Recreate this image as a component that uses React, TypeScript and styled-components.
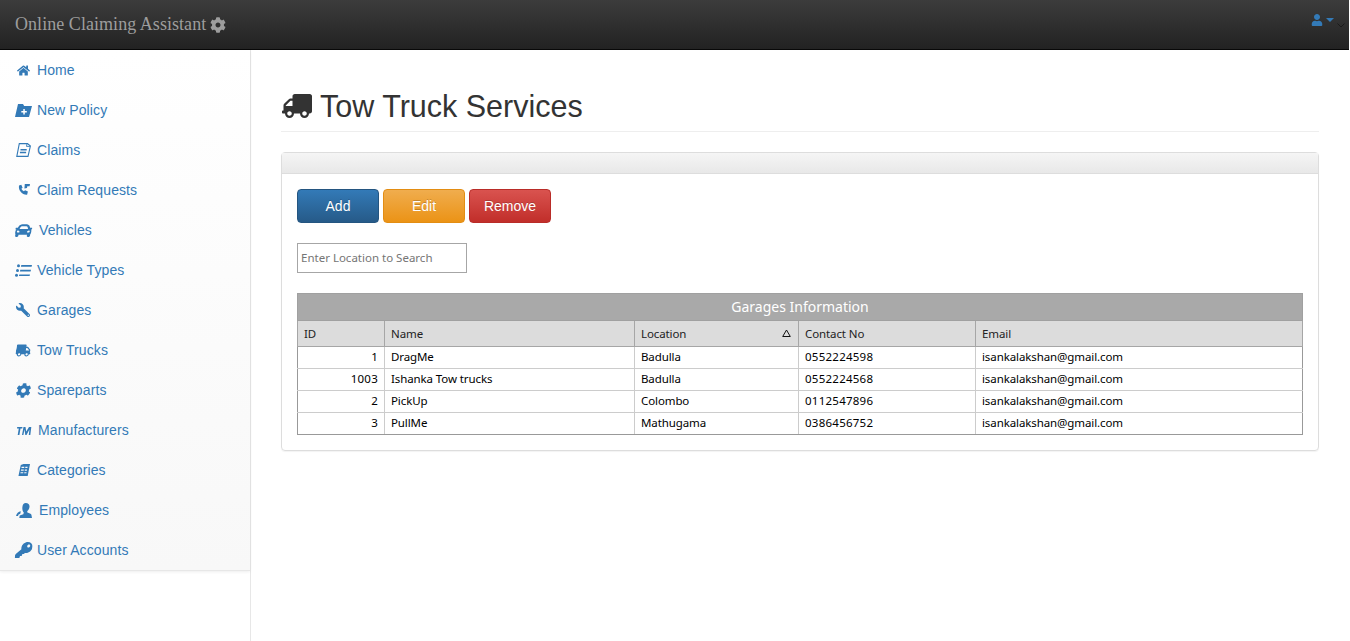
import { ReactNode } from 'react';
import styled, { createGlobalStyle } from 'styled-components';
import { FaCar, FaCog, FaHome, FaKey, FaTruck, FaUser, FaWrench } from 'react-icons/fa';

const GlobalStyle = createGlobalStyle`
  html, body {
    margin: 0;
    height: 100%;
    background: #fff;
    font-family: "Liberation Sans", Arial, sans-serif;
    font-size: 14px;
    color: #333;
  }
  * { box-sizing: border-box; }
`;

const Page = styled.div`
  display: flex;
  flex-direction: column;
  width: 1349px;
  height: 641px;
  overflow: hidden;
`;

const Navbar = styled.header`
  flex: none;
  height: 50px;
  display: flex;
  align-items: center;
  justify-content: space-between;
  padding: 0 4px 0 15px;
  background: linear-gradient(to bottom, #3c3c3c, #222);
  border-bottom: 1px solid #080808;
`;

const Brand = styled.div`
  display: flex;
  align-items: center;
  gap: 4px;
  font-family: "Liberation Serif", "Times New Roman", serif;
  font-size: 18px;
  letter-spacing: 0.05px;
  color: #9d9d9d;
`;

const UserMenu = styled.div`
  display: flex;
  align-items: center;
  gap: 3px;
  margin-bottom: 10px;
  color: #337ab7;
  font-size: 13px;
`;

const Caret = styled.span`
  width: 0;
  height: 0;
  border-top: 4px solid #337ab7;
  border-left: 4px solid transparent;
  border-right: 4px solid transparent;
`;

const Chevron = styled.svg`
  width: 8px;
  height: 5px;
  margin-top: 11px;
`;

const Body = styled.div`
  flex: 1;
  display: flex;
  min-height: 0;
`;

const Sidebar = styled.aside`
  flex: none;
  width: 251px;
  border-right: 1px solid #e7e7e7;
`;

const NavList = styled.nav`
  background: linear-gradient(to bottom, #fff, #f8f8f8);
  border-bottom: 1px solid #e7e7e7;
  box-shadow: 0 1px 3px rgba(0, 0, 0, 0.07);
`;

const NavItem = styled.a<{ $gap: number }>`
  display: flex;
  align-items: center;
  height: 40px;
  padding-left: 15px;
  gap: ${(p) => p.$gap}px;
  color: #337ab7;
  font-size: 14px;
  letter-spacing: 0.1px;
`;

const IconSlot = styled.span<{ $transform?: string }>`
  display: flex;
  align-items: center;
  justify-content: center;
  width: 17px;
  transform: ${(p) => p.$transform || 'none'};
`;

const Main = styled.main`
  flex: 1;
  padding: 0 30px;
`;

const PageHeader = styled.h1`
  display: flex;
  align-items: center;
  gap: 8px;
  margin: 40px 0 20px;
  height: 42px;
  padding: 0 0 10px 1px;
  border-bottom: 1px solid #eee;
  font-size: 30.5px;
  font-weight: 400;
  color: #333;
  line-height: 32px;
`;

const HeaderTruck = styled(FaTruck)`
  transform: scaleX(-1);
`;

const Panel = styled.section`
  border: 1px solid #ddd;
  border-radius: 4px;
  box-shadow: 0 1px 1px rgba(0, 0, 0, 0.05);
`;

const PanelHeading = styled.div`
  height: 21px;
  background: linear-gradient(to bottom, #f5f5f5, #e8e8e8);
  border-bottom: 1px solid #ddd;
`;

const PanelBody = styled.div`
  padding: 15px;
`;

const Toolbar = styled.div`
  display: flex;
  gap: 4px;
`;

const ActionButton = styled.button<{ $from: string; $to: string; $edge: string }>`
  width: 82px;
  height: 34px;
  border: 1px solid ${(p) => p.$edge};
  border-radius: 4px;
  background: linear-gradient(to bottom, ${(p) => p.$from}, ${(p) => p.$to});
  color: #fff;
  font-family: inherit;
  font-size: 14px;
  text-shadow: 0 -1px 0 rgba(0, 0, 0, 0.2);
`;

const SearchInput = styled.input`
  display: block;
  width: 170px;
  height: 30px;
  margin: 20px 0;
  padding: 0 3px 2px;
  border: 1px solid #a6a6a6;
  font-family: "Noto Sans", sans-serif;
  font-size: 11.5px;
  &::placeholder { color: #757575; opacity: 1; }
`;

const Grid = styled.table`
  width: 100%;
  table-layout: fixed;
  border-collapse: collapse;
  font-family: "Noto Sans", sans-serif;
  font-size: 11.5px;
  letter-spacing: -0.1px;
  color: #000;
`;

const GridCaption = styled.th`
  height: 27px;
  padding: 0 0 2px;
  background: #a9a9a9;
  border: 1px solid #a0a0a0;
  color: #fff;
  font-size: 14px;
  font-weight: 400;
  letter-spacing: 0;
`;

const HeadCell = styled.th`
  height: 26px;
  padding: 0 6px 1px;
  background: #dcdcdc;
  border: 1px solid #a6a6a6;
  font-weight: 400;
  text-align: left;
  color: #222;
`;

const SortWrap = styled.span`
  display: flex;
  justify-content: space-between;
  align-items: center;
`;

const SortMark = styled.svg`
  width: 9px;
  height: 8px;
  margin-right: 1px;
`;

const Cell = styled.td<{ $right?: boolean; $numeric?: boolean }>`
  height: 22px;
  padding: 0 6px 2px;
  border: 1px solid #ccc;
  text-align: ${(p) => (p.$right ? 'right' : 'left')};
  letter-spacing: ${(p) => (p.$numeric ? '0.25px' : 'inherit')};
  white-space: nowrap;
  &:first-child { border-left-color: #999; }
  &:last-child { border-right-color: #999; }
  tr:last-child > & { border-bottom-color: #999; }
`;

// glyphs that the icon packages don't have in this shape
const FolderPlus = () => (
  <svg viewBox="0 0 17 13" width={17} height={13} fill="currentColor">
    <path
      fillRule="evenodd"
      d="M3 0h5l1.200 2H17l-3 11H0zM8.300 5v2H6.300v1.500h2v2h1.500v-2h2V7h-2V5z"
    />
  </svg>
);

const FileLines = () => (
  <svg viewBox="0 0 15 14" width={15} height={14} fill="none" stroke="currentColor" strokeWidth="1.100">
    <path d="M3.300.6h8.200l2.900 2.400L12 13.400H.8z" />
    <path d="M11 .8l-.5 2.600h3.500" strokeWidth=".9" />
    <path d="M4.500 6.800h6.200M3.900 9.600h6.200" strokeWidth="1.500" />
  </svg>
);

const PhoneReply = () => (
  <svg viewBox="0 0 12 12" width={12} height={12} fill="currentColor">
    <path d="M1 1.500 3.300.7l1.300 3-1.200 1.100c.5 1.200 1.400 2 2.500 2.500l1.200-1.100 2.800 1.400-.8 3.100C4 11 .2 6.300 1 1.500z" />
    <path d="M6.800 0H12l-.4 2.300H9.300l-.3 1.600-2.600.7z" />
  </svg>
);

const ListTilted = () => (
  <svg viewBox="0 0 17 13" width={17} height={13} fill="currentColor">
    <circle cx="3.500" cy="1.700" r="1.500" />
    <circle cx="2.500" cy="6.500" r="1.500" />
    <circle cx="1.500" cy="11.300" r="1.500" />
    <path d="M6.300 1h10.700l-.4 1.700H5.900zM5.300 5.700H16l-.4 1.700H4.900zM4.300 10.400H15l-.4 1.700H3.900z" />
  </svg>
);

const TrademarkMark = () => (
  <svg viewBox="0 0 16 10" width={16} height={10} fill="currentColor" style={{ marginTop: 2 }}>
    <path d="M1.200 1H6.500l-.3 1.400H4.500L3.400 9H1.700l1.100-6.600H1zM7.500 1h2l.7 4.600L13 1h2.300l-1 8h-1.500l.6-5.400L10.500 9H9.300l-.8-5.400L7.400 9H6z" />
  </svg>
);

const Ledger = () => (
  <svg viewBox="0 0 13 14" width={12} height={14} fill="currentColor">
    <path
      fillRule="evenodd"
      d="M3 1.500 6 .5h7l-2.500 13H.5zM3.900 3.600l-.2 1.200h3l.2-1.200zM8 3.600l-.2 1.200h2.400l.2-1.200zM3.300 6.500l-.2 1.200h3l.2-1.200zM7.400 6.500l-.2 1.200h2.400l.2-1.200zM2.800 9.400l-.2 1.200h3l.2-1.200zM6.900 9.400l-.2 1.200h2.400l.2-1.200z"
    />
  </svg>
);

const EmployeeIcon = () => (
  <svg viewBox="0 0 16 15" width={16} height={15} fill="currentColor">
    <path d="M9.800 0c2.500 0 4 1.700 3.700 4-.2 1.700-1.100 3.400-2.300 4.200l.2 1.300c1.700.6 3.800 1.100 4 2.300l.6 3.200H3.300l.4-2.400 3.600-1.300.5-1.900C6.700 8.300 6.100 6.300 6.400 4 6.700 1.600 7.800 0 9.800 0z" />
    <path d="M4.800 8.300 4.300 10.700 2.600 11.500 2 13H0c.6-2.600 2.400-4.400 4.800-4.700z" />
  </svg>
);

const TILT = 'skewX(-10deg)';

type NavEntry = { label: string; icon: ReactNode; gap: number; transform?: string };

const navEntries: NavEntry[] = [
  { label: 'Home', icon: <FaHome size={13} />, gap: 5 },
  { label: 'New Policy', icon: <FolderPlus />, gap: 5 },
  { label: 'Claims', icon: <FileLines />, gap: 5 },
  { label: 'Claim Requests', icon: <PhoneReply />, gap: 5 },
  { label: 'Vehicles', icon: <FaCar size={17} />, gap: 7, transform: TILT },
  { label: 'Vehicle Types', icon: <ListTilted />, gap: 5 },
  { label: 'Garages', icon: <FaWrench size={14} />, gap: 5, transform: 'scaleX(-1)' },
  { label: 'Tow Trucks', icon: <FaTruck size={15} />, gap: 5, transform: TILT },
  { label: 'Spareparts', icon: <FaCog size={15} />, gap: 5, transform: TILT },
  { label: 'Manufacturers', icon: <TrademarkMark />, gap: 6 },
  { label: 'Categories', icon: <Ledger />, gap: 5 },
  { label: 'Employees', icon: <EmployeeIcon />, gap: 7 },
  { label: 'User Accounts', icon: <FaKey size={16} />, gap: 5, transform: TILT },
];

const garages = [
  { id: 1, name: 'DragMe', location: 'Badulla', contact: '0552224598' },
  { id: 1003, name: 'Ishanka Tow trucks', location: 'Badulla', contact: '0552224568' },
  { id: 2, name: 'PickUp', location: 'Colombo', contact: '0112547896' },
  { id: 3, name: 'PullMe', location: 'Mathugama', contact: '0386456752' },
];

const App = () => {
  return (
    <Page>
      <GlobalStyle />
      <Navbar>
        <Brand>
          Online Claiming Assistant <FaCog size={16} />
        </Brand>
        <UserMenu>
          <FaUser size={12} />
          <Caret />
          <Chevron viewBox="0 0 8 5" fill="none" stroke="#1a1a1a" strokeWidth="1">
            <path d="M.5.5 4 4 7.500.5" />
          </Chevron>
        </UserMenu>
      </Navbar>
      <Body>
        <Sidebar>
          <NavList>
            {navEntries.map((item) => (
              <NavItem key={item.label} $gap={item.gap}>
                <IconSlot $transform={item.transform}>{item.icon}</IconSlot>
                {item.label}
              </NavItem>
            ))}
          </NavList>
        </Sidebar>
        <Main>
          <PageHeader>
            <HeaderTruck size={30} />
            Tow Truck Services
          </PageHeader>
          <Panel>
            <PanelHeading />
            <PanelBody>
              <Toolbar>
                <ActionButton $from="#337ab7" $to="#265a88" $edge="#245580">Add</ActionButton>
                <ActionButton $from="#f0ad4e" $to="#eb9316" $edge="#e38d13">Edit</ActionButton>
                <ActionButton $from="#d9534f" $to="#c12e2a" $edge="#b92c28">Remove</ActionButton>
              </Toolbar>
              <SearchInput placeholder="Enter Location to Search" />
              <Grid>
                <colgroup>
                  <col style={{ width: 87 }} />
                  <col style={{ width: 250 }} />
                  <col style={{ width: 164 }} />
                  <col style={{ width: 177 }} />
                  <col />
                </colgroup>
                <thead>
                  <tr>
                    <GridCaption colSpan={5}>Garages Information</GridCaption>
                  </tr>
                  <tr>
                    <HeadCell>ID</HeadCell>
                    <HeadCell>Name</HeadCell>
                    <HeadCell>
                      <SortWrap>
                        Location
                        <SortMark viewBox="0 0 9 8" fill="none" stroke="#111" strokeWidth="1">
                          <path d="M4.500 1 8.300 7.500H.7z" />
                        </SortMark>
                      </SortWrap>
                    </HeadCell>
                    <HeadCell>Contact No</HeadCell>
                    <HeadCell>Email</HeadCell>
                  </tr>
                </thead>
                <tbody>
                  {garages.map((row) => (
                    <tr key={row.id}>
                      <Cell $right $numeric>{row.id}</Cell>
                      <Cell>{row.name}</Cell>
                      <Cell>{row.location}</Cell>
                      <Cell $numeric>{row.contact}</Cell>
                      <Cell>isankalakshan@gmail.com</Cell>
                    </tr>
                  ))}
                </tbody>
              </Grid>
            </PanelBody>
          </Panel>
        </Main>
      </Body>
    </Page>
  );
};

export default App;
